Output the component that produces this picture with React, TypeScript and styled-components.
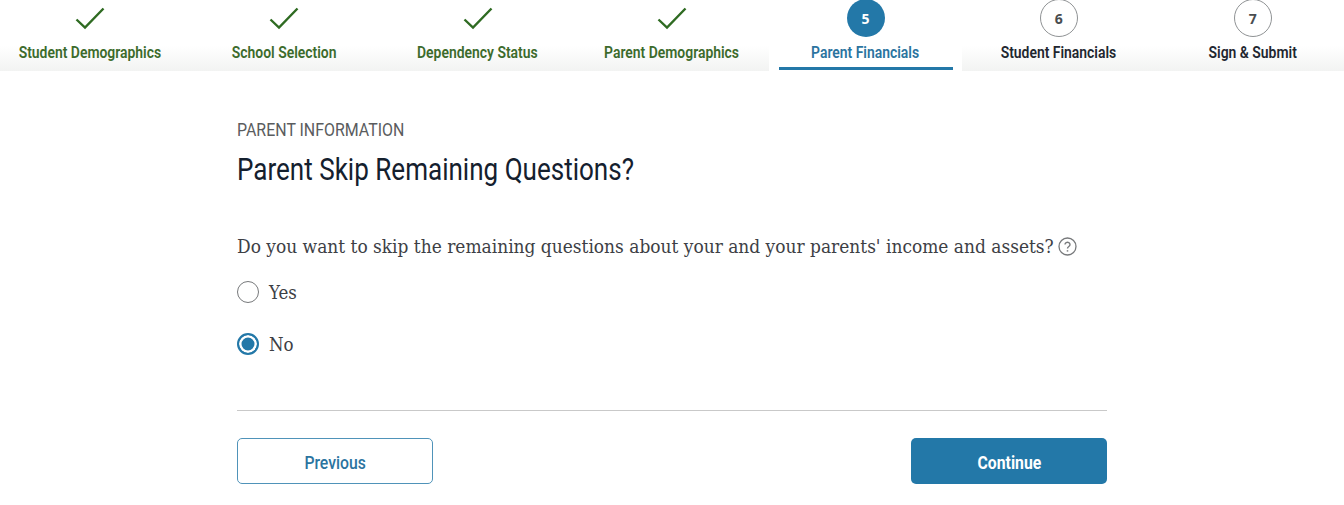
import styled, { createGlobalStyle } from "styled-components";

const GlobalStyle = createGlobalStyle`
  html, body {
    margin: 0;
    background: #fff;
  }
  body {
    font-family: "Roboto", "Liberation Sans", sans-serif;
    overflow: hidden;
  }
`;

const Nav = styled.nav`
  display: grid;
  grid-template-columns: repeat(7, 193.8px);
  height: 71px;
  margin-left: -7px;
  overflow: hidden;
  background: linear-gradient(#fff 65%, #f2f3f2 100%);
`;

const Step = styled.div<{ $active?: boolean }>`
  display: flex;
  flex-direction: column;
  align-items: center;
  position: relative;
  background: ${(p) => (p.$active ? "#fff" : "transparent")};
  margin: ${(p) => (p.$active ? "0 0 0 1px" : "0")};
  &::after {
    content: "";
    display: ${(p) => (p.$active ? "block" : "none")};
    position: absolute;
    left: 10px;
    right: 9px;
    bottom: 1px;
    height: 3px;
    background: #2378a8;
  }
`;

const Marker = styled.div`
  height: 37px;
  display: flex;
  align-items: flex-end;
  justify-content: center;
`;

const CheckIcon = styled.svg`
  width: 30px;
  height: 24px;
  margin: 0 0 7px 1px;
  fill: none;
  stroke: #2f6b22;
  stroke-width: 2.4;
`;

const Circle = styled.div<{ $active?: boolean }>`
  width: 38px;
  height: 38px;
  box-sizing: border-box;
  border-radius: 50%;
  display: flex;
  align-items: center;
  justify-content: center;
  font-family: "Open Sans", sans-serif;
  font-size: 14px;
  font-weight: 700;
  color: ${(p) => (p.$active ? "#fff" : "#4a4d50")};
  background: ${(p) => (p.$active ? "#2378a8" : "#fff")};
  border: ${(p) => (p.$active ? "none" : "1.5px solid #8f9294")};
`;

const StepLabel = styled.span<{ $color: string }>`
  display: inline-block;
  margin-top: 6px;
  font-size: 16px;
  line-height: 19px;
  font-weight: 600;
  white-space: nowrap;
  transform: scaleX(0.87);
  color: ${(p) => p.$color};
`;

const Main = styled.main`
  width: 870px;
  margin: 0 auto;
  padding-top: 48px;
`;

const Eyebrow = styled.div`
  font-size: 18px;
  line-height: 22px;
  color: #5a5c5e;
  transform: scaleX(0.885);
  transform-origin: left;
`;

const Title = styled.h1`
  margin: 10px 0 0;
  font-size: 31px;
  line-height: 38px;
  font-weight: 400;
  color: #14202e;
  transform: scaleX(0.84);
  transform-origin: left;
`;

const Question = styled.div`
  margin-top: 45px;
  display: flex;
  align-items: center;
  gap: 4px;
  font-family: "DejaVu Serif Condensed", "Liberation Serif", serif;
  font-size: 18.95px;
  line-height: 24px;
  color: #3d4045;
`;

const HelpIcon = styled.svg`
  width: 19px;
  height: 19px;
  fill: none;
  stroke: #77797b;
`;

const RadioGroup = styled.div`
  margin-top: 22px;
  display: flex;
  flex-direction: column;
  gap: 28px;
`;

const RadioRow = styled.label`
  display: flex;
  align-items: center;
  gap: 10px;
  height: 24px;
  font-family: "DejaVu Serif Condensed", "Liberation Serif", serif;
  font-size: 18.5px;
  color: #3d4045;
`;

const RadioMark = styled.span<{ $checked?: boolean }>`
  width: 22px;
  height: 22px;
  box-sizing: border-box;
  border-radius: 50%;
  border: ${(p) => (p.$checked ? "2px solid #2378a8" : "1.5px solid #77797b")};
  background: ${(p) => (p.$checked ? "#2378a8" : "#fff")};
  box-shadow: ${(p) => (p.$checked ? "inset 0 0 0 2.5px #fff" : "none")};
`;

const Footer = styled.div`
  margin-top: 54px;
  padding-top: 27px;
  border-top: 1px solid #c9c9c9;
  display: flex;
  justify-content: space-between;
`;

const Button = styled.button<{ $primary?: boolean }>`
  width: 196px;
  height: 46px;
  padding: 2px 0 0;
  box-sizing: border-box;
  border-radius: 5px;
  font-family: inherit;
  background: ${(p) => (p.$primary ? "#2378a8" : "#fff")};
  border: ${(p) => (p.$primary ? "none" : "1.5px solid #4f93b9")};
`;

const ButtonText = styled.span<{ $primary?: boolean }>`
  display: inline-block;
  font-size: 18px;
  font-weight: ${(p) => (p.$primary ? 700 : 500)};
  color: ${(p) => (p.$primary ? "#fff" : "#2b749f")};
  transform: scaleX(0.875);
`;

const steps = [
  { label: "Student Demographics", done: true },
  { label: "School Selection", done: true },
  { label: "Dependency Status", done: true },
  { label: "Parent Demographics", done: true },
  { label: "Parent Financials", num: 5, active: true },
  { label: "Student Financials", num: 6 },
  { label: "Sign & Submit", num: 7 },
];

const App = () => {
  return (
    <>
      <GlobalStyle />
      <Nav>
        {steps.map((s) => (
          <Step key={s.label} $active={s.active}>
            <Marker>
              {s.done ? (
                <CheckIcon viewBox="0 0 30 24">
                  <path d="M1.5 13.5 L10 21.5 L28.5 2.5" />
                </CheckIcon>
              ) : (
                <Circle $active={s.active}>{s.num}</Circle>
              )}
            </Marker>
            <StepLabel
              $color={s.done ? "#3c6b2c" : s.active ? "#2b749f" : "#1f2730"}
            >
              {s.label}
            </StepLabel>
          </Step>
        ))}
      </Nav>
      <Main>
        <Eyebrow>PARENT INFORMATION</Eyebrow>
        <Title>Parent Skip Remaining Questions?</Title>
        <Question>
          Do you want to skip the remaining questions about your and your parents' income and assets?
          <HelpIcon viewBox="0 0 19 19">
            <circle cx="9.5" cy="9.5" r="8.5" strokeWidth="1.3" />
            <path d="M7 7.5a2.5 2.3 0 1 1 3.8 2c-.9.6-1.3 1-1.3 2" strokeWidth="1.4" />
            <path d="M9.5 13.2v1.4" strokeWidth="1.5" />
          </HelpIcon>
        </Question>
        <RadioGroup>
          <RadioRow>
            <RadioMark />
            Yes
          </RadioRow>
          <RadioRow>
            <RadioMark $checked />
            No
          </RadioRow>
        </RadioGroup>
        <Footer>
          <Button>
            <ButtonText>Previous</ButtonText>
          </Button>
          <Button $primary>
            <ButtonText $primary>Continue</ButtonText>
          </Button>
        </Footer>
      </Main>
    </>
  );
};

export default App;
